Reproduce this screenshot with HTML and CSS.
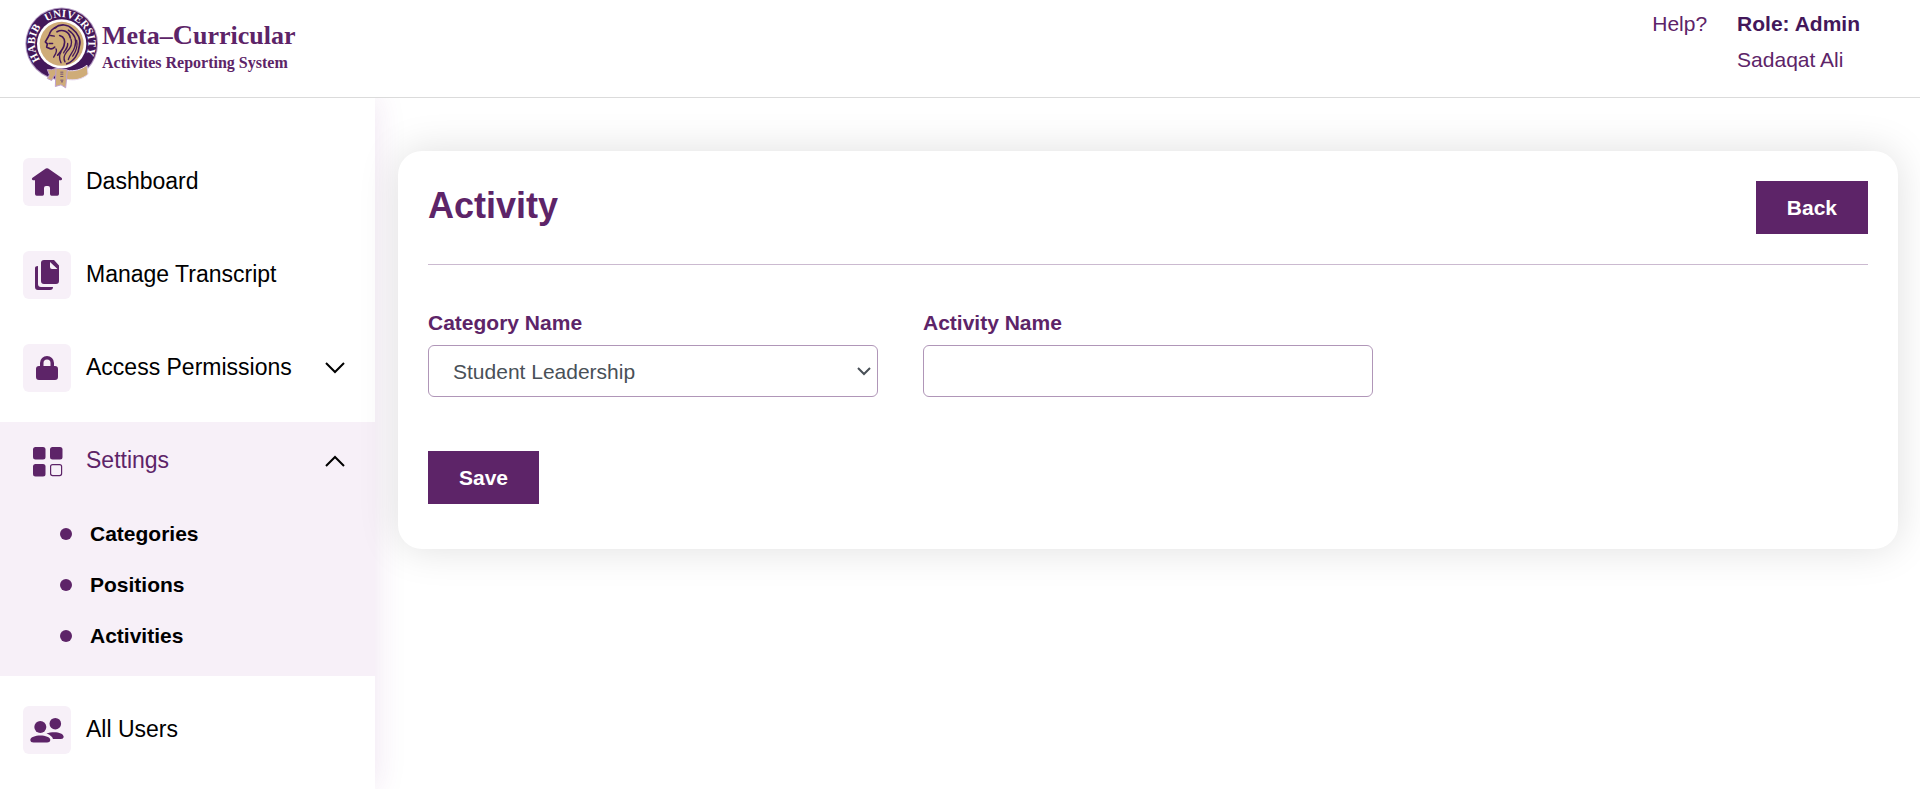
FILE: index.html
```html
<!DOCTYPE html>
<html lang="en">
<head>
<meta charset="utf-8">
<meta name="viewport" content="width=device-width, initial-scale=1">
<title>Activity</title>
<link rel="stylesheet" href="styles.css">
</head>
<body>
<header class="header">
  <a class="brand" href="#">
    <svg class="crest" viewBox="12 21 228 252" aria-hidden="true">
      <defs><path id="ring" d="M61 181A80 80 0 1 1 189 181"/></defs>
      <circle cx="125" cy="133" r="109" fill="#b49cc4"/>
      <circle cx="125" cy="133" r="106" fill="#43175a"/>
      <circle cx="125" cy="133" r="74" fill="#fff"/>
      <circle cx="125" cy="133" r="66" fill="#cfac78"/>
      <text class="crest-text"><textPath href="#ring" startOffset="0">HABIB</textPath></text>
      <text class="crest-text"><textPath href="#ring" startOffset="129">UNIVERSITY</textPath></text>
      <g fill="none" stroke="#43175a" stroke-width="5" stroke-linecap="round" stroke-linejoin="round">
        <path d="M108 84C95 88 90 96 87 108L76 127L82 133L80 143L87 146Q94 152 104 143"/>
        <path d="M87 132L98 132M92 108L103 110" stroke-width="4"/>
        <path d="M103 86C122 71 144 75 157 88C174 101 184 121 178 140C176 164 161 186 140 193"/>
        <path d="M111 97C128 87 147 97 151 115M119 108C133 112 137 124 132 139C128 151 121 158 113 167"/>
        <path d="M145 92C165 105 171 124 164 143C160 158 149 165 145 180M153 119C159 135 149 148 140 157C132 167 130 178 135 187" stroke-width="4"/>
        <path d="M108 148C113 156 105 165 101 173M123 157C115 170 119 181 123 190M170 123Q175 147 158 170M143 132C145 146 133 153 131 160" stroke-width="4"/>
      </g>
      <path d="M139 213C164 216 183 211 201 197L204 224C186 240 162 244 139 239Z" fill="#cfac78" stroke="#e5d6ee" stroke-width="3"/>
      <path d="M82 210Q94 213 107 207L116 207L113 221Q100 228 95 243L82 237L88 226Z" fill="#cfac78" stroke="#c0a1ce" stroke-width="3"/>
      <path d="M108 206L142 211L137 265L123 256L106 261Z" fill="#cfac78" stroke="#c0a1ce" stroke-width="3"/>
      <path d="M121 218h9m-9 6h9m-9 7h9m-9 11h9m-7 5h6" stroke="#715075" stroke-width="3"/>
    </svg>
    <span class="brand-text">
      <span class="brand-name">Meta–<span class="brand-cap">C</span>urricular</span>
      <span class="brand-sub">Activites Reporting System</span>
    </span>
  </a>
  <div class="account">
    <a href="#">Help?</a>
    <div class="user"><strong>Role: Admin</strong><span>Sadaqat Ali</span></div>
  </div>
</header>
<div class="layout">
  <nav class="sidebar" aria-label="Main">
    <a class="item" href="#">
      <svg class="icon" viewBox="0 0 48 48" aria-hidden="true"><path d="M22.8 10.6Q24 9.800 25.200 10.600L38.500 19.800Q40 21.500 38 22.300H36V36Q36 37.700 34.300 37.700H28.500Q27 37.700 27 36V30Q27 28 25 28H23Q21 28 21 30V36Q21 37.700 19.500 37.700H13.700Q12 37.700 12 36V22.300H10Q8 21.500 9.500 19.800Z"/></svg>
      <span class="item-label">Dashboard</span>
    </a>
    <a class="item" href="#">
      <svg class="icon" viewBox="0 0 48 48" aria-hidden="true"><path fill-rule="evenodd" d="M21 9H31L36 14.500V30Q36 33 33 33H21Q18 33 18 30V12Q18 9 21 9ZM27 11V16Q27 18 29 18H34.500Z"/><path d="M12 17Q12 15 15 15V33Q15 36 18 36H30Q30 39 27 39H15Q12 39 12 36Z"/></svg>
      <span class="item-label">Manage Transcript</span>
    </a>
    <button class="item" type="button" aria-expanded="false">
      <svg class="icon" viewBox="0 0 48 48" aria-hidden="true"><path fill-rule="evenodd" d="M17 22V19A7 7 0 0 1 31 19V22H32Q35 22 35 25V33Q35 36 32 36H16Q13 36 13 33V25Q13 22 16 22ZM20.500 22H27.500V19A3.500 3.500 0 0 0 20.500 19Z"/></svg>
      <span class="item-label">Access Permissions</span>
      <svg class="chevron" viewBox="0 0 20 12" aria-hidden="true"><path d="M1 1L10 10L19 1"/></svg>
    </button>
    <div class="group">
      <button class="item item-active" type="button" aria-expanded="true">
        <svg class="icon" viewBox="0 0 48 48" aria-hidden="true"><rect x="10" y="10" width="12.500" height="12.500" rx="2.500"/><rect x="27" y="10" width="12.500" height="12.500" rx="2.500"/><rect x="10" y="27" width="12.500" height="12.500" rx="2.500"/><rect x="27.600" y="27.600" width="11" height="11" rx="2" fill="none" stroke="#5d2468" stroke-width="1.200"/></svg>
        <span class="item-label">Settings</span>
        <svg class="chevron" viewBox="0 0 20 12" aria-hidden="true"><path d="M1 11L10 2L19 11"/></svg>
      </button>
      <ul class="submenu">
        <li><a href="#">Categories</a></li>
        <li><a href="#">Positions</a></li>
        <li><a href="#">Activities</a></li>
      </ul>
    </div>
    <a class="item" href="#">
      <svg class="icon" viewBox="0 0 48 48" aria-hidden="true"><circle cx="17.300" cy="21" r="6"/><circle cx="32.300" cy="17.700" r="5.800"/><path d="M7.300 34C7.300 28 27.300 28 27.300 34Q27 36.500 24 36.500H10.500Q7.500 36.500 7.300 34Z"/><path d="M23.500 27.500C30 25 40.700 26 40.700 31Q40.500 33 38 33H30Q29 29.500 23.500 27.500Z"/></svg>
      <span class="item-label">All Users</span>
    </a>
  </nav>
  <main class="main">
    <section class="card">
      <div class="card-head">
        <h1 class="title">Activity</h1>
        <button class="btn" type="button">Back</button>
      </div>
      <form class="form">
        <div class="fields">
          <div class="field">
            <label for="category">Category Name</label>
            <div class="select-wrap">
              <select class="control" id="category"><option>Student Leadership</option></select>
              <svg class="caret" viewBox="0 0 14 9" aria-hidden="true"><path d="M1 1L7 7L13 1"/></svg>
            </div>
          </div>
          <div class="field">
            <label for="activity">Activity Name</label>
            <input class="control" id="activity" type="text">
          </div>
        </div>
        <button class="btn" type="button">Save</button>
      </form>
    </section>
  </main>
</div>
</body>
</html>
```
FILE: styles.css
```css
*, *::before, *::after { box-sizing: border-box; }

body {
  margin: 0;
  min-height: 100vh;
  display: flex;
  flex-direction: column;
  background: #fff;
  color: #000;
  font-family: "Liberation Sans", Arial, sans-serif;
  font-size: 21px;
}

a { color: inherit; text-decoration: none; }
button, input, select { font: inherit; color: inherit; }

.header {
  position: relative;
  z-index: 1;
  display: flex;
  justify-content: space-between;
  align-items: flex-start;
  padding: 6px 60px 6px 24px;
  background: #fff;
  border-bottom: 1px solid #dbdbdb;
}

.brand { display: flex; align-items: flex-start; gap: 2px; color: #5d2468; }
.crest { width: 76px; height: 85px; }
.crest-text { font: bold 33px "Liberation Serif", serif; fill: #fff; }
.brand-text {
  display: flex;
  flex-direction: column;
  padding-top: 12px;
  font-family: "Liberation Serif", serif;
  font-weight: bold;
}
.brand-name { font-size: 26px; line-height: 36px; }
.brand-cap { font-size: 28px; line-height: 1; }
.brand-sub { font-size: 16px; line-height: 18px; }

.account { display: flex; gap: 30px; line-height: 36px; color: #5d2468; }
.user { display: flex; flex-direction: column; }
.user strong { color: #43175a; }

.layout { flex: 1; display: flex; }

.sidebar {
  flex: none;
  width: 375px;
  display: flex;
  flex-direction: column;
  gap: 15px;
  padding-top: 45px;
  box-shadow: 0 0 30px rgba(120, 36, 140, 0.12);
}

.item {
  display: flex;
  align-items: center;
  gap: 15px;
  width: 100%;
  padding: 15px 30px 15px 23px;
  border: 0;
  background: none;
  font-size: 23px;
  text-align: left;
}
.item-active { color: #5d2468; }
.item-label { padding-bottom: 3px; line-height: 36px; }
.icon {
  flex: none;
  width: 48px;
  height: 48px;
  border-radius: 6px;
  background: #f7f0f8;
  fill: #5d2468;
}
.chevron {
  width: 20px;
  height: 12px;
  margin-left: auto;
  fill: none;
  stroke: #000;
  stroke-width: 2;
}

.group { background: #f7f0f8; }
.submenu { margin: 0; padding: 8px 0 15px 60px; list-style: none; }
.submenu a {
  display: flex;
  align-items: center;
  gap: 18px;
  font-weight: bold;
  line-height: 51px;
}
.submenu a::before {
  content: "";
  width: 12px;
  height: 12px;
  border-radius: 50%;
  background: #5d2468;
}

.main { flex: 1; min-width: 0; padding: 53px 22px 53px 23px; }
.card {
  padding: 30px 30px 45px;
  border-radius: 24px;
  background: #fff;
  box-shadow: 0 0 40px rgba(0, 0, 0, 0.13);
}
.card-head {
  display: flex;
  justify-content: space-between;
  align-items: flex-start;
  padding-bottom: 30px;
  border-bottom: 1px solid #cbbad0;
}
.title { margin: 0; font-size: 36px; line-height: 50px; color: #5d2468; }

.btn {
  padding: 0 31px;
  border: 0;
  background: #5d2468;
  color: #fff;
  font-weight: bold;
  line-height: 53px;
}

.form { padding-top: 43px; }
.fields {
  display: grid;
  grid-template-columns: repeat(3, 1fr);
  gap: 45px;
  margin-bottom: 54px;
}
.field label {
  display: block;
  margin-bottom: 7px;
  font-weight: bold;
  line-height: 30px;
  color: #5d2468;
}
.control {
  display: block;
  width: 100%;
  height: 52px;
  padding: 0 24px;
  border: 1px solid #b096b8;
  border-radius: 6px;
  background: #fff;
  color: #495057;
  appearance: none;
}
.select-wrap { position: relative; }
.caret {
  position: absolute;
  top: 22px;
  right: 7px;
  width: 14px;
  height: 9px;
  fill: none;
  stroke: #495057;
  stroke-width: 2;
  pointer-events: none;
}
```
